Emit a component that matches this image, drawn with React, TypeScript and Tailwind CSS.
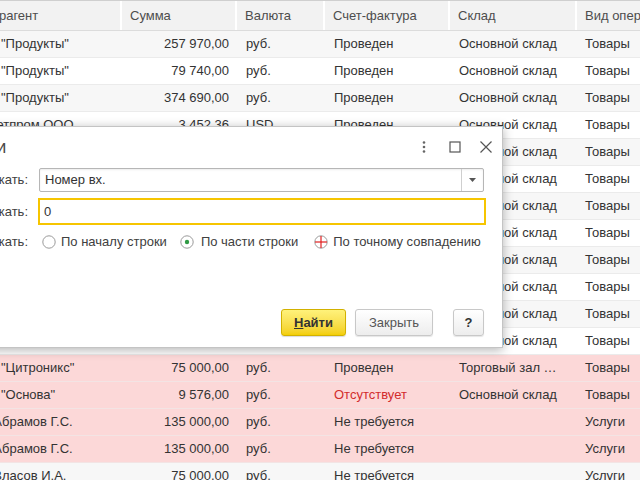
import { useState } from 'react';

type Row = {
  k: string;
  s: string;
  v: string;
  f: string;
  w: string;
  o: string;
  pink?: boolean;
  red?: boolean;
};

const prod = (s: string): Row => ({ k: 'ЗАО "Продукты"', s, v: 'руб.', f: 'Проведен', w: 'Основной склад', o: 'Товары' });

const rows: Row[] = [
  prod('257 970,00'),
  prod('79 740,00'),
  prod('374 690,00'),
  { k: 'Инметпром ООО', s: '3 452,36', v: 'USD', f: 'Проведен', w: 'Основной склад', o: 'Товары' },
  prod('12 400,00'),
  prod('48 300,00'),
  prod('96 120,00'),
  prod('15 800,00'),
  prod('61 250,00'),
  prod('23 940,00'),
  prod('88 000,00'),
  prod('142 560,00'),
  { k: 'ЗАО "Цитроникс"', s: '75 000,00', v: 'руб.', f: 'Проведен', w: 'Торговый зал …', o: 'Товары', pink: true },
  { k: 'ЗАО "Основа"', s: '9 576,00', v: 'руб.', f: 'Отсутствует', w: 'Основной склад', o: 'Товары', pink: true, red: true },
  { k: 'ИП Абрамов Г.С.', s: '135 000,00', v: 'руб.', f: 'Не требуется', w: '', o: 'Услуги', pink: true },
  { k: 'ИП Абрамов Г.С.', s: '135 000,00', v: 'руб.', f: 'Не требуется', w: '', o: 'Услуги', pink: true },
  { k: 'ИП Власов И.А.', s: '75 000,00', v: 'руб.', f: 'Не требуется', w: '', o: 'Услуги' },
];

const Radio = ({ checked, cursor }: { checked?: boolean; cursor?: boolean }) => (
  <svg width="14" height="14" viewBox="0 0 14 14" className="shrink-0">
    <circle cx="7" cy="7" r="6.2" fill="#fff" stroke="#9a9a9a" strokeWidth="1" />
    {checked && <circle cx="7" cy="7" r="2.2" fill="#2f9a44" />}
    {cursor && (
      <g stroke="#e02020" strokeWidth="1.2">
        <line x1="1" y1="7" x2="13" y2="7" />
        <line x1="7" y1="1" x2="7" y2="13" />
      </g>
    )}
  </svg>
);

export default function App() {
  const [mode, setMode] = useState(1);

  return (
    <div className="relative w-[640px] h-[480px] overflow-hidden bg-white font-['Liberation_Sans',Arial,sans-serif] text-[13px] text-[#333]">
      {/* list */}
      <div className="ml-[-37px] w-[720px]">
        <div className="flex h-[31px] items-center bg-[#f2f2f2] border-t border-[#cfcfcf] border-b border-b-[#dcdcdc] text-[#4d4d4d]">
          <div className="w-[159px] pl-2 h-full flex items-center border-r-2 border-white">Контрагент</div>
          <div className="w-[115px] pl-2 h-full flex items-center border-r-2 border-white">Сумма</div>
          <div className="w-[88px] pl-2 h-full flex items-center border-r-2 border-white">Валюта</div>
          <div className="w-[125px] pl-2 h-full flex items-center border-r-2 border-white">Счет-фактура</div>
          <div className="w-[127px] pl-2 h-full flex items-center border-r-2 border-white">Склад</div>
          <div className="w-[100px] pl-2 h-full flex items-center whitespace-nowrap">Вид операции</div>
        </div>
        {rows.map((r, i) => (
          <div
            key={i}
            className={`flex h-[27px] items-center border-b whitespace-nowrap ${
              r.pink ? 'bg-[#fcd8d8] border-[#f3e4e4]' : i % 2 === 0 ? 'bg-[#f7f7f7] border-[#ebebeb]' : 'bg-white border-[#ebebeb]'
            }`}
          >
            <div className="w-[159px] pl-2 overflow-hidden">{r.k}</div>
            <div className="w-[115px] pr-2 text-right">{r.s}</div>
            <div className="w-[88px] pl-[9px]">{r.v}</div>
            <div className={`w-[125px] pl-[9px] ${r.red ? 'text-[#d22c2c]' : ''}`}>{r.f}</div>
            <div className="w-[127px] pl-[9px]">{r.w}</div>
            <div className="w-[100px] pl-2">{r.o}</div>
          </div>
        ))}
      </div>

      {/* search dialog */}
      <div className="absolute top-[126px] left-[-120px] w-[623px] h-[222px] bg-white border border-[#c4c4c4] shadow-[0_2px_10px_rgba(0,0,0,0.3)] flex flex-col pl-[60px] pr-[18px] text-[#404040]">
        <div className="flex items-center h-[40px] shrink-0">
          <div className="ml-[14px] text-[18px] text-[#4a4a4a]">Найти</div>
          <div className="ml-auto flex items-center gap-[17px] mr-[-9px] text-[#555]">
            <svg width="14" height="14" viewBox="0 0 14 14">
              <circle cx="7" cy="2.5" r="1.3" fill="#666" />
              <circle cx="7" cy="7" r="1.3" fill="#666" />
              <circle cx="7" cy="11.5" r="1.3" fill="#666" />
            </svg>
            <svg width="14" height="14" viewBox="0 0 14 14">
              <rect x="2" y="2" width="10" height="10" fill="none" stroke="#555" strokeWidth="1.2" />
            </svg>
            <svg width="14" height="14" viewBox="0 0 14 14">
              <path d="M1.5 1.5 L12.5 12.5 M12.5 1.5 L1.5 12.5" stroke="#555" strokeWidth="1.2" />
            </svg>
          </div>
        </div>

        <div className="flex items-center h-[24px] mt-[1px]">
          <div className="w-[87px] text-right">Где искать:</div>
          <div className="ml-[11px] flex-1 h-[24px] flex items-center border border-[#b6b6b6] rounded-[2px] shadow-[inset_0_1px_2px_rgba(0,0,0,0.08)]">
            <div className="flex-1 pl-[5px] text-[#333]">Номер вх.</div>
            <div className="w-[22px] h-full border-l border-[#cfcfcf] flex items-center justify-center">
              <svg width="7" height="4" viewBox="0 0 7 4">
                <path d="M0 0 H7 L3.5 4 Z" fill="#555" />
              </svg>
            </div>
          </div>
        </div>

        <div className="flex items-center h-[27px] mt-[6px]">
          <div className="w-[87px] text-right">Что искать:</div>
          <div className="ml-[10px] mr-[-2px] flex-1 h-[27px] flex items-center border-2 border-[#f6c500] pl-[4px] text-[#333]">0</div>
        </div>

        <div className="flex items-center h-[18px] mt-[8px]">
          <div className="w-[87px] text-right">Как искать:</div>
          <div className="ml-[14px] flex items-center gap-[5px] cursor-pointer" onClick={() => setMode(0)}>
            <Radio checked={mode === 0} />
            <span>По началу строки</span>
          </div>
          <div className="ml-[13px] flex items-center gap-[7px] cursor-pointer" onClick={() => setMode(1)}>
            <Radio checked={mode === 1} />
            <span>По части строки</span>
          </div>
          <div className="ml-[16px] flex items-center gap-[5px] cursor-pointer" onClick={() => setMode(2)}>
            <Radio checked={mode === 2} cursor />
            <span>По точному совпадению</span>
          </div>
        </div>

        <div className="mt-auto mb-[11px] flex justify-end items-center">
          <button className="w-[65px] h-[27px] rounded-[3px] border border-[#d2b100] bg-gradient-to-b from-[#fff27a] to-[#f3cf00] font-bold text-[#333] shadow-[0_1px_1px_rgba(0,0,0,0.15)]">
            <span className="underline">Н</span>айти
          </button>
          <button className="ml-[9px] w-[78px] h-[27px] rounded-[3px] border border-[#c8c8c8] bg-gradient-to-b from-white to-[#ededed] text-[#555] shadow-[0_1px_1px_rgba(0,0,0,0.1)]">
            Закрыть
          </button>
          <button className="ml-[20px] w-[31px] h-[27px] rounded-[3px] border border-[#c8c8c8] bg-gradient-to-b from-white to-[#ededed] font-bold text-[#333] shadow-[0_1px_1px_rgba(0,0,0,0.1)]">
            ?
          </button>
        </div>
      </div>
    </div>
  );
}
